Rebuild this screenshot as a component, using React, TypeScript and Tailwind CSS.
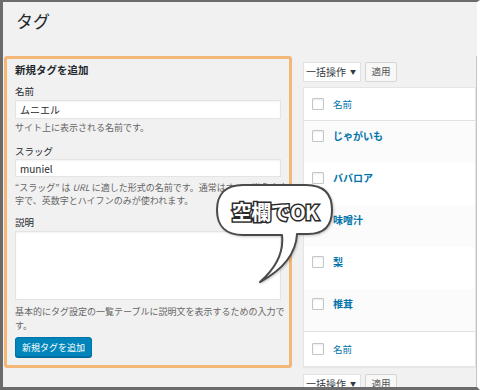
const jp = "font-['Noto_Sans_CJK_JP','Noto_Sans',sans-serif]";

type Tag = { name: string };

const tags: Tag[] = [
  { name: "じゃがいも" },
  { name: "ババロア" },
  { name: "味噌汁" },
  { name: "梨" },
  { name: "椎茸" },
];

function Checkbox() {
  return <span className="block h-[12px] w-[12px] shrink-0 rounded-[1px] border border-[#c3c6c9] bg-white shadow-[inset_0_1px_2px_rgba(0,0,0,0.08)]" />;
}

function BulkActions() {
  return (
    <div className="flex items-center gap-[4px]">
      <div className="flex h-[20px] w-[58px] items-center justify-between border border-[#e2e2e2] bg-white pl-[2px] pr-[4px] text-[10px] leading-none text-[#32373c]">
        <span>一括操作</span>
        <span className="text-[6px]">▼</span>
      </div>
      <div className="flex h-[20px] w-[32px] items-center justify-center rounded-[2px] border border-[#d5d5d5] bg-[#f7f7f7] text-[9.5px] leading-none text-[#555]">
        適用
      </div>
    </div>
  );
}

function SpeechBubble() {
  return (
    <div className="absolute left-[207px] top-[178px] h-[105px] w-[130px]">
      <svg width="130" height="105" viewBox="0 0 130 105" className="absolute inset-0 drop-shadow-[1px_1px_1px_rgba(0,0,0,0.2)]">
        <path
          d="M87 54 L98 54 C115 54 122 45 122 30 C122 13 113 5 96 5 L33 5 C16 5 7 14 7 30 C7 46 16 55 33 55 L72 55 C74 72 66 88 50 102 C72 90 86 75 87 54 Z"
          fill="#ffffff"
          stroke="#4a4a4a"
          strokeWidth="2"
          strokeLinejoin="round"
        />
      </svg>
      <div className="absolute left-0 top-0 flex h-[64px] w-[130px] items-center justify-center">
        <span className={`${jp} text-[20px] font-bold leading-none tracking-[-0.5px] text-white [-webkit-text-stroke:3px_#2b2b2b] [paint-order:stroke_fill]`}>
          空欄でOK
        </span>
      </div>
    </div>
  );
}

export default function App() {
  return (
    <div className={`${jp} relative h-[390px] w-[480px] overflow-hidden border-b-[3px] border-l-[3px] border-r-[3px] border-t-2 border-[#6b6b6b] border-r-white bg-[#f1f1f1] text-[#23282d]`}>
      <h1 className="ml-[13px] mt-[7px] h-[24px] text-[17px] font-normal leading-[24px] text-[#23282d]">タグ</h1>

      <div className="mt-[23px] flex items-start">
        {/* left: add new tag */}
        <div className="ml-[1px] h-[312px] w-[288px] shrink-0 rounded-[3px] border-[3px] border-[#f3b878] px-[8px] pt-[3px]">
          <h2 className="text-[10.5px] font-bold leading-[16px]">新規タグを追加</h2>

          <div className="mt-[6px] text-[9.5px] leading-[14px]">名前</div>
          <div className="mt-[2px] flex h-[19px] w-[266px] items-center border border-[#e4e4e4] bg-white px-[4px] text-[10px] shadow-[inset_0_1px_2px_rgba(0,0,0,0.05)]">
            ムニエル
          </div>
          <p className="mt-[2px] text-[9px] leading-[13px] text-[#666]">サイト上に表示される名前です。</p>

          <div className="mt-[10px] text-[9.5px] leading-[14px]">スラッグ</div>
          <div className="mt-[1px] flex h-[18px] w-[266px] items-center border border-[#e4e4e4] bg-white px-[4px] text-[10px] shadow-[inset_0_1px_2px_rgba(0,0,0,0.05)]">
            muniel
          </div>
          <p className="mt-[4px] whitespace-nowrap text-[9px] leading-[13px] text-[#666]">
            “スラッグ” は <i>URL</i> に適した形式の名前です。通常はすべて半角小文
            <br />
            字で、英数字とハイフンのみが使われます。
          </p>

          <div className="mt-[8px] text-[9.5px] leading-[14px]">説明</div>
          <div className="mt-[2px] h-[69px] w-[266px] border border-[#e4e4e4] bg-white shadow-[inset_0_1px_2px_rgba(0,0,0,0.05)]" />
          <p className="mt-[5px] whitespace-nowrap text-[9px] leading-[14px] text-[#666]">
            基本的にタグ設定の一覧テーブルに説明文を表示するための入力で
            <br />
            す。
          </p>

          <button
            type="button"
            className="mt-[4px] flex h-[20px] w-[77px] items-center justify-center rounded-[3px] border border-[#0073aa] bg-[#0085ba] text-[9px] leading-none text-white shadow-[0_1px_0_#006799]"
          >
            新規タグを追加
          </button>
        </div>

        {/* right: tag list */}
        <div className="ml-[11px] w-[173px] shrink-0 pt-[6px]">
          <BulkActions />

          <div className="mt-[5px] border border-[#e5e5e5] bg-white shadow-[0_1px_1px_rgba(0,0,0,0.04)]">
            <div className="flex h-[33px] items-center gap-[9px] border-b border-[#e1e1e1] pl-[8px]">
              <Checkbox />
              <span className="text-[9.5px] text-[#0073aa]">名前</span>
            </div>
            {tags.map((tag, i) => (
              <div
                key={tag.name}
                className={`flex h-[42px] items-start gap-[9px] pl-[8px] pt-[7px] ${i % 2 === 0 ? "bg-[#fbfbfb]" : "bg-white"}`}
              >
                <span className="mt-[2px]">
                  <Checkbox />
                </span>
                <span className="text-[10px] font-bold leading-[16px] text-[#0073aa]">{tag.name}</span>
              </div>
            ))}
            <div className="flex h-[35px] items-center gap-[9px] border-t border-[#e1e1e1] pl-[8px]">
              <Checkbox />
              <span className="text-[9.5px] text-[#0073aa]">名前</span>
            </div>
          </div>

          <div className="mt-[7px]">
            <BulkActions />
          </div>
        </div>

        <div className="h-[340px] w-px shrink-0 bg-[#c4c4c4]" />
      </div>

      <SpeechBubble />
    </div>
  );
}
